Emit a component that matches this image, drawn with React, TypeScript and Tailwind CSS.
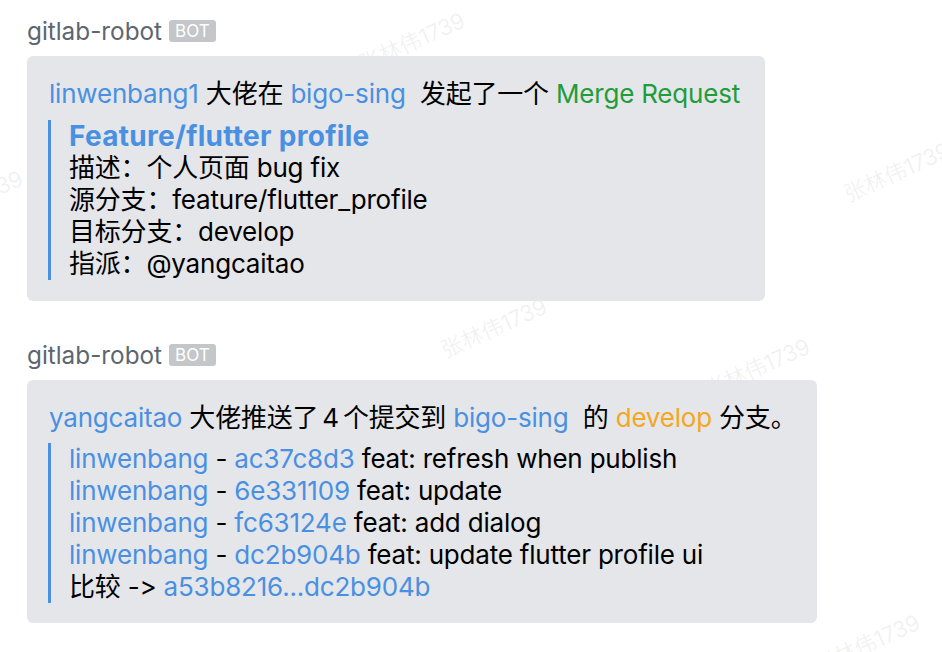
import React from 'react';

const font = { fontFamily: 'Inter, "Noto Sans CJK SC", sans-serif' };

const marks = [
    { left: 360, top: 54 },
    { left: 845, top: 184 },
    { left: 442, top: 340 },
    { left: 705, top: 380 },
    { left: 815, top: 656 },
    { left: -82, top: 212 },
];

const Watermark = () => (
    <div className="absolute inset-0 z-0 pointer-events-none select-none">
        {marks.map((m, i) => (
            <span
                key={i}
                className="absolute text-[22px] leading-none font-light text-[#f0f0f0] whitespace-nowrap origin-left -rotate-[24deg]"
                style={{ left: m.left, top: m.top }}
            >
                张林伟1739
            </span>
        ))}
    </div>
);

const Header = () => (
    <div className="flex items-center h-[32px] gap-[7px]">
        <span className="text-[24.3px] text-[#5c6670] tracking-normal">gitlab-robot</span>
        <span className="h-[22px] px-[6px] rounded-[3px] bg-[#c4c6ca] text-white text-[17px] leading-[22px] tracking-normal">BOT</span>
    </div>
);

const Link = ({ children }: { children: React.ReactNode }) => <span className="text-[#4a90e2]">{children}</span>;

const commits = [
    { hash: 'ac37c8d3', msg: 'feat: refresh when publish' },
    { hash: '6e331109', msg: 'feat: update' },
    { hash: 'fc63124e', msg: 'feat: add dialog' },
    { hash: 'dc2b904b', msg: 'feat: update flutter profile ui' },
];

export default function App() {
    return (
        <div
            className="relative w-[942px] h-[652px] bg-white overflow-hidden [font-feature-settings:'calt'_0,'liga'_0]"
            style={font}
        >
            <Watermark />
            <div className="relative z-10 pl-[27px] pt-[15px] text-[26px] leading-[32px] tracking-[-0.2px] text-black">
                <Header />
                <div className="mt-[9px] w-[738px] rounded-[6px] bg-[#e4e6e9] pl-[22px] pr-[20px] pt-[22px] pb-[21px]">
                    <div className="whitespace-nowrap">
                        <Link>linwenbang1</Link> 大佬在 <Link>bigo-sing</Link>{'\u00a0 '}发起了一个 <span className="text-[#1f9d3b]">Merge Request</span>
                    </div>
                    <div className="mt-[10px] border-l-[3px] border-[#4a90e2] pl-[18px] -ml-px">
                        <div className="font-bold text-[28px] tracking-[0.3px] text-[#4a90e2]">Feature/flutter profile</div>
                        <div>描述：个人页面 bug fix</div>
                        <div>源分支：feature/flutter_profile</div>
                        <div>目标分支：develop</div>
                        <div>指派：@yangcaitao</div>
                    </div>
                </div>

                <div className="mt-[38px]">
                    <Header />
                </div>
                <div className="mt-[9px] w-[790px] rounded-[6px] bg-[#e4e6e9] pl-[22px] pr-[20px] pt-[22px] pb-[20px]">
                    <div className="whitespace-nowrap">
                        <Link>yangcaitao</Link> 大佬推送了<span className="mx-[4px]">4</span>个提交到 <Link>bigo-sing</Link>{'\u00a0 '}的 <span className="text-[#f5a623]">develop</span> 分支。
                    </div>
                    <div className="mt-[9px] border-l-[3px] border-[#4a90e2] pl-[18px] -ml-px">
                        {commits.map((c) => (
                            <div key={c.hash} className="whitespace-nowrap">
                                <Link>linwenbang</Link> - <Link>{c.hash}</Link> {c.msg}
                            </div>
                        ))}
                        <div>
                            比较 -&gt; <Link>a53b8216...dc2b904b</Link>
                        </div>
                    </div>
                </div>
            </div>
        </div>
    );
}
